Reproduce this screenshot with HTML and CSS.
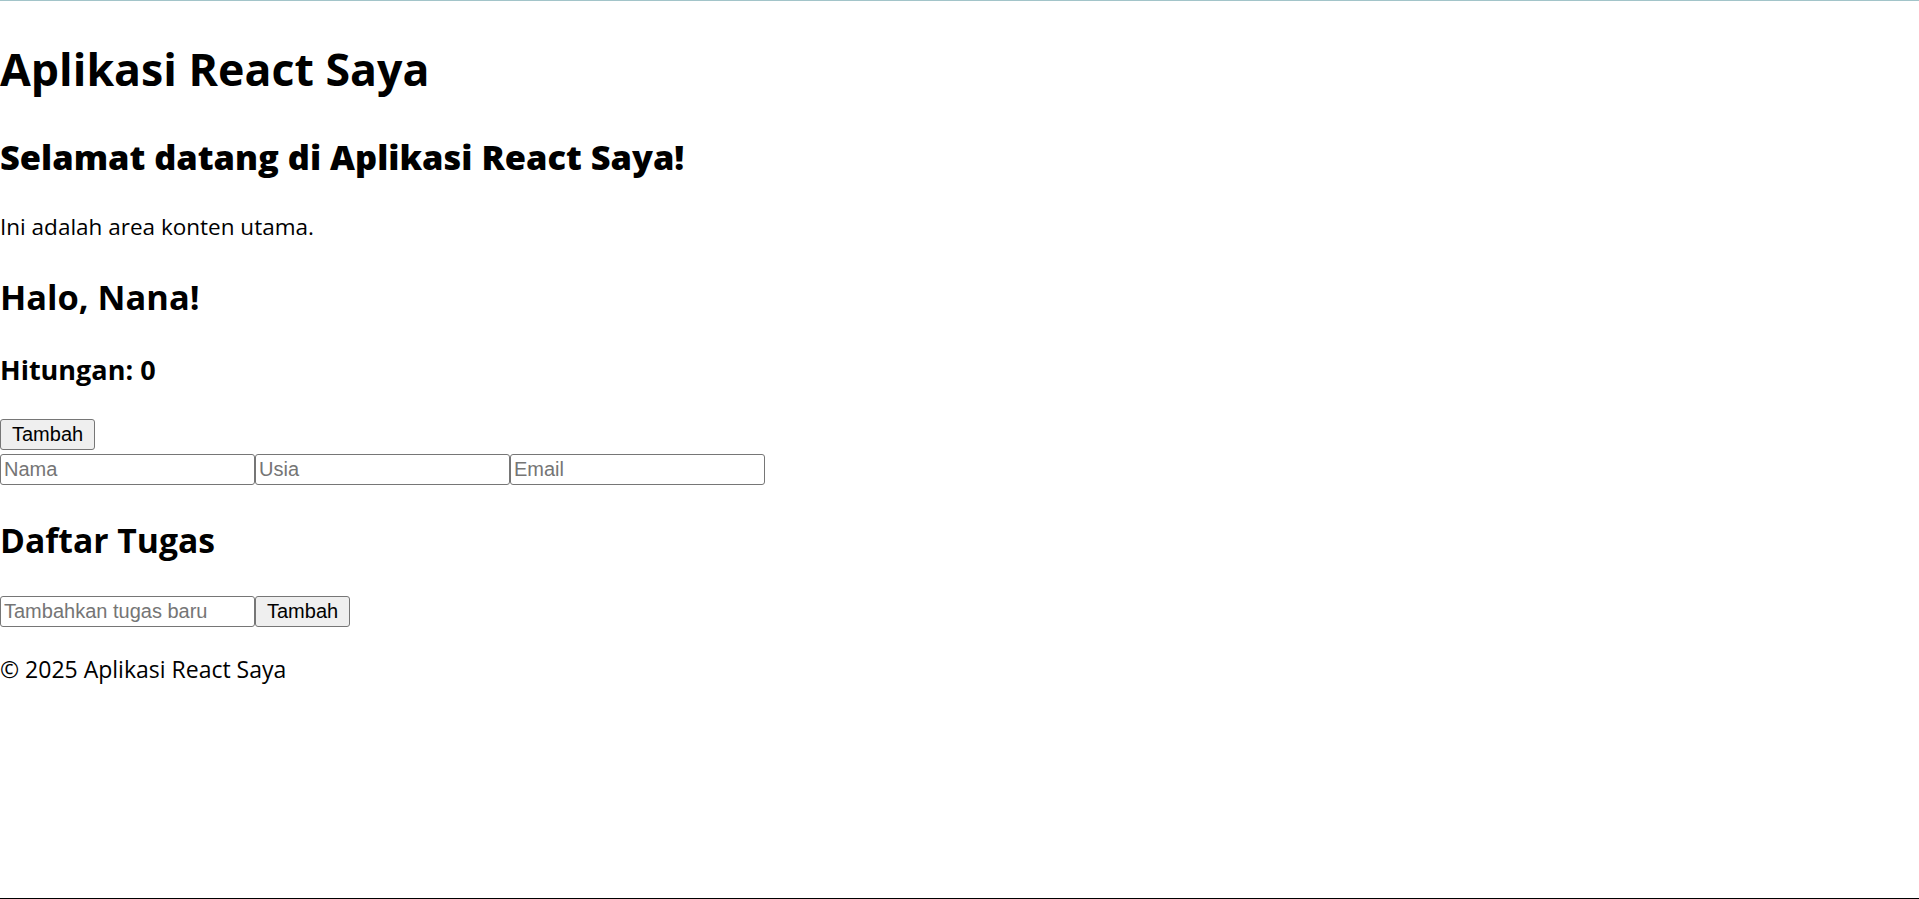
FILE: index.html
```html
<!DOCTYPE html>
<html lang="id">
<head>
<meta charset="utf-8">
<title>Aplikasi React Saya</title>
<link rel="stylesheet" href="styles.css">
</head>
<body>
<div id="root" class="app">
  <header class="app-header">
    <h1 class="app-title">Aplikasi React Saya</h1>
  </header>
  <main class="app-main">
    <h2 class="welcome">Selamat datang di Aplikasi React Saya!</h2>
    <p class="lead">Ini adalah area konten utama.</p>
    <h2 class="greeting">Halo, Nana!</h2>
    <h3 class="counter">Hitungan: 0</h3>
    <div class="counter-actions">
      <button class="btn" type="button">Tambah</button>
    </div>
    <form class="user-form">
      <input class="field" type="text" placeholder="Nama">
      <input class="field" type="text" placeholder="Usia">
      <input class="field" type="text" placeholder="Email">
    </form>
    <section class="todo">
      <h2 class="todo-title">Daftar Tugas</h2>
      <div class="todo-form">
        <input class="field" type="text" placeholder="Tambahkan tugas baru">
        <button class="btn" type="button">Tambah</button>
      </div>
    </section>
  </main>
  <footer class="app-footer">
    <p class="copyright">© 2025 Aplikasi React Saya</p>
  </footer>
</div>
</body>
</html>
```
FILE: styles.css
```css
html, body {
  margin: 0;
  padding: 0;
}

body {
  min-height: 100vh;
  box-sizing: border-box;
  border-top: 1px solid #a2c4c9;
  border-bottom: 1px solid #000;
  background: #fff;
  color: #000;
  font-family: "Open Sans", "Noto Sans", sans-serif;
}

.app-title,
.welcome,
.lead,
.greeting,
.counter,
.todo-title,
.copyright {
  margin: 0;
}

.app-title {
  margin-top: 38px;
  font-size: 44.7px;
  line-height: 60px;
  font-weight: 700;
}

.welcome {
  margin-top: 34px;
  font-size: 34.4px;
  line-height: 48px;
  font-weight: 800;
}

.lead {
  margin-top: 30px;
  font-size: 22.5px;
  line-height: 32px;
}

.greeting {
  margin-top: 30px;
  font-size: 34.4px;
  line-height: 48px;
  font-weight: 700;
}

.counter {
  margin-top: 29.5px;
  font-size: 27px;
  line-height: 38px;
  font-weight: 700;
}

.counter-actions {
  margin-top: 30.5px;
  display: flex;
}

.user-form {
  margin-top: 4px;
  display: flex;
}

.todo-title {
  margin-top: 31px;
  font-size: 33.7px;
  line-height: 48px;
  font-weight: 700;
}

.todo-form {
  margin-top: 32px;
  display: flex;
}

.copyright {
  margin-top: 26px;
  font-size: 23px;
  line-height: 32px;
}

.field,
.btn {
  box-sizing: border-box;
  height: 31px;
  margin: 0;
  font-family: "Liberation Sans", Arial, sans-serif;
  font-size: 20px;
  color: #000;
  border: 1.5px solid #767676;
  border-radius: 3px;
}

.field {
  width: 255px;
  padding: 1.5px 3px;
  background: #fff;
}

.field::placeholder {
  color: #757575;
}

.btn {
  padding: 1.5px 11px;
  background: #efefef;
  cursor: pointer;
}
```
